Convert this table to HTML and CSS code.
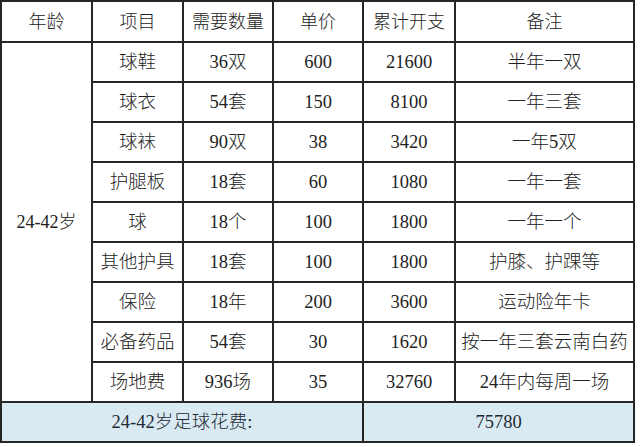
FILE: index.html
```html
<!DOCTYPE html>
<html lang="zh">
<head>
<meta charset="utf-8">
<title>足球花费</title>
<link rel="stylesheet" href="styles.css">
</head>
<body>
<table class="cost">
  <colgroup>
    <col class="c1"><col class="c2"><col class="c3"><col class="c4"><col class="c5"><col class="c6">
  </colgroup>
  <thead>
    <tr class="head"><th>年龄</th><th>项目</th><th>需要数量</th><th>单价</th><th>累计开支</th><th>备注</th></tr>
  </thead>
  <tbody>
    <tr><td rowspan="9" class="age">24-42岁</td><td>球鞋</td><td>36双</td><td>600</td><td>21600</td><td>半年一双</td></tr>
    <tr><td>球衣</td><td>54套</td><td>150</td><td>8100</td><td>一年三套</td></tr>
    <tr><td>球袜</td><td>90双</td><td>38</td><td>3420</td><td>一年5双</td></tr>
    <tr><td>护腿板</td><td>18套</td><td>60</td><td>1080</td><td>一年一套</td></tr>
    <tr><td>球</td><td>18个</td><td>100</td><td>1800</td><td>一年一个</td></tr>
    <tr><td>其他护具</td><td>18套</td><td>100</td><td>1800</td><td>护膝、护踝等</td></tr>
    <tr><td>保险</td><td>18年</td><td>200</td><td>3600</td><td>运动险年卡</td></tr>
    <tr><td>必备药品</td><td>54套</td><td>30</td><td>1620</td><td>按一年三套云南白药</td></tr>
    <tr><td>场地费</td><td>936场</td><td>35</td><td>32760</td><td>24年内每周一场</td></tr>
  </tbody>
  <tfoot>
    <tr class="total"><td colspan="4">24-42岁足球花费:</td><td colspan="2">75780</td></tr>
  </tfoot>
</table>
</body>
</html>
```

FILE: styles.css
```css
html, body {
  margin: 0;
  padding: 0;
  background: #ffffff;
}

.cost {
  border-collapse: collapse;
  table-layout: fixed;
  width: 633px;
  margin: 0;
  font-family: "Liberation Serif", "Noto Sans CJK SC", serif;
  font-size: 18px;
  font-weight: 300;
  color: #222222;
}

.c1 { width: 91px; }
.c2 { width: 91px; }
.c3 { width: 90px; }
.c4 { width: 90px; }
.c5 { width: 92px; }
.c6 { width: 179px; }

.cost th,
.cost td {
  border: 2px solid #262626;
  height: 38px;
  padding: 0;
  text-align: center;
  vertical-align: middle;
  font-weight: 300;
  white-space: nowrap;
  line-height: 20px;
}

.cost td:not(.age) {
  font-size: 18.5px;
}

.cost .head th {
  height: 39px;
}

.cost .total td {
  background: #daeaf3;
  color: #1f2a36;
  height: 38px;
}
```
